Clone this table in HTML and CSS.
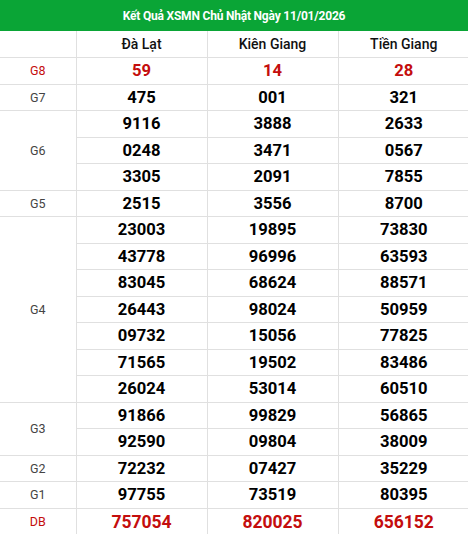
FILE: index.html
```html
<!DOCTYPE html>
<html lang="vi">
<head>
<meta charset="utf-8">
<title>XSMN</title>
<link rel="stylesheet" href="styles.css">
</head>
<body>
<div class="board">
  <div class="title">Kết Quả XSMN Chủ Nhật Ngày 11/01/2026</div>
  <table class="results">
    <colgroup><col class="c-label"><col class="c-prov"><col class="c-prov"><col class="c-prov"></colgroup>
    <thead>
      <tr class="head"><th></th><th>Đà Lạt</th><th>Kiên Giang</th><th>Tiền Giang</th></tr>
    </thead>
    <tbody>
      <tr class="hot"><td class="lbl">G8</td><td>59</td><td>14</td><td>28</td></tr>
      <tr><td class="lbl">G7</td><td>475</td><td>001</td><td>321</td></tr>
      <tr><td class="lbl" rowspan="3">G6</td><td>9116</td><td>3888</td><td>2633</td></tr>
      <tr><td>0248</td><td>3471</td><td>0567</td></tr>
      <tr><td>3305</td><td>2091</td><td>7855</td></tr>
      <tr><td class="lbl">G5</td><td>2515</td><td>3556</td><td>8700</td></tr>
      <tr><td class="lbl" rowspan="7">G4</td><td>23003</td><td>19895</td><td>73830</td></tr>
      <tr><td>43778</td><td>96996</td><td>63593</td></tr>
      <tr><td>83045</td><td>68624</td><td>88571</td></tr>
      <tr><td>26443</td><td>98024</td><td>50959</td></tr>
      <tr><td>09732</td><td>15056</td><td>77825</td></tr>
      <tr><td>71565</td><td>19502</td><td>83486</td></tr>
      <tr><td>26024</td><td>53014</td><td>60510</td></tr>
      <tr><td class="lbl" rowspan="2">G3</td><td>91866</td><td>99829</td><td>56865</td></tr>
      <tr><td>92590</td><td>09804</td><td>38009</td></tr>
      <tr><td class="lbl">G2</td><td>72232</td><td>07427</td><td>35229</td></tr>
      <tr><td class="lbl">G1</td><td>97755</td><td>73519</td><td>80395</td></tr>
      <tr class="hot db"><td class="lbl">DB</td><td>757054</td><td>820025</td><td>656152</td></tr>
    </tbody>
  </table>
</div>
</body>
</html>
```
FILE: styles.css
```css
html, body {
  margin: 0;
  padding: 0;
  background: #fff;
}
body {
  font-family: Roboto, "Noto Sans", Arial, sans-serif;
}
.board {
  width: 468px;
  overflow: hidden;
}
.title {
  height: 31px;
  background: #0aa536;
  color: #fff;
  font-size: 12px;
  font-weight: 700;
  display: flex;
  align-items: center;
  justify-content: center;
  letter-spacing: -0.2px;
}
.results {
  width: 469px;
  border-collapse: collapse;
  table-layout: fixed;
}
.c-label { width: 76px; }
.c-prov { width: 131px; }
.results th,
.results td {
  padding: 0;
  text-align: center;
  vertical-align: middle;
  border-left: 1px solid #e0e0e0;
  border-bottom: 1px solid #e0e0e0;
}
.results th:first-child,
.results td.lbl {
  border-left: none;
}
.head th {
  height: 26px;
  font-size: 14px;
  font-weight: 500;
  color: #111;
}
.results tbody tr {
  height: 26.5px;
}
.results td {
  font-size: 16.6px;
  font-weight: 700;
  color: #000;
}
.results td.lbl {
  font-size: 12.5px;
  font-weight: 400;
  color: #444;
}
.hot td {
  color: #c40d0d;
}
.hot td.lbl {
  color: #c40d0d;
}
.db td {
  border-bottom: none;
  font-size: 17.5px;
}
.db td.lbl {
  font-size: 12.5px;
}
```
